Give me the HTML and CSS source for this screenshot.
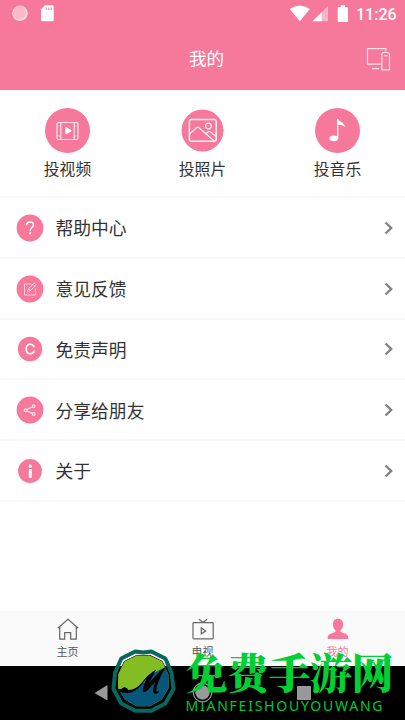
FILE: index.html
```
<!DOCTYPE html>
<html lang="zh-CN">
<head>
<meta charset="utf-8">
<title>我的</title>
<link rel="stylesheet" href="styles.css">
</head>
<body>
<div class="screen">
  <header class="header">
    <div class="status">
      <svg class="status-left" width="60" height="28" viewBox="0 0 60 28">
        <circle cx="20" cy="13.300" r="7.800" fill="#fdd5df"/>
        <circle cx="19.300" cy="12.600" r="6.500" fill="#fbb9ca"/>
        <path d="M45 5.300h7.500q1.200 0 1.200 1.200v13.500q0 1.200-1.200 1.200h-10.200q-1.200 0-1.200-1.200v-10.700z" fill="#fff"/>
        <path d="M46.200 7.500v2.500M48.700 7.500v2.500M51.200 7.500v2.500" stroke="#f799b1" stroke-width="1.300"/>
      </svg>
      <svg class="status-icons" width="62" height="28" viewBox="288 0 62 28">
        <path d="M289.800 9Q299.800 1.800 309.800 9L299.800 21.200z" fill="#fff"/>
        <path d="M312.500 21.200L328 6V21.200z" fill="#fab4c7"/>
        <path d="M312.500 21.200L321.700 12.200V21.200z" fill="#fff"/>
        <path d="M338.700 7h2V5.200h4.200V7h2q1 0 1 1v13q0 1-1 1h-8.200q-1 0-1-1V8q0-1 1-1z" fill="#fff"/>
      </svg>
      <span class="time">11:26</span>
    </div>
    <div class="titlebar">
      <h1 class="title">我的</h1>
      <svg class="devices" width="26" height="26" viewBox="0 0 26 26" fill="none" stroke="#fff" stroke-opacity=".8" stroke-width="1.200">
        <path d="M15.500 18.200H2.500V2.600H20.800V5.500M7 22.700h7"/>
        <path d="M16.800 23.800V9q0-2.500 2-2.500h3.400q2.300 0 2.300 2.500v14.800z"/>
        <path d="M19.300 9.700h3"/>
      </svg>
    </div>
  </header>

  <section class="casts">
    <div class="cast">
      <svg width="46" height="46" viewBox="0 0 46 46">
        <circle cx="22.500" cy="22.500" r="22.500" fill="#f6799b"/>
        <g fill="none" stroke="#fff" stroke-opacity=".8" stroke-width="1.200">
          <rect x="12" y="14.500" width="21" height="17" rx="1.500"/>
          <path d="M15.800 14.500v17M29.200 14.500v17"/>
          <path d="M12 18h3.800M12 28h3.800M29.200 18H33M29.200 28H33" stroke-opacity=".4"/>
        </g>
        <path d="M20.300 19.900q0-1.200 1.200-.7l4.500 2.800q1 .7 0 1.400L21.500 26.200q-1.200.5-1.200-.7z" fill="#fff"/>
      </svg>
      <span>投视频</span>
    </div>
    <div class="cast">
      <svg width="46" height="46" viewBox="0 0 46 46">
        <circle cx="22.500" cy="22.500" r="21" fill="#f6799b"/>
        <g fill="none" stroke="#fff" stroke-opacity=".9" stroke-width="1.500">
          <rect x="9.400" y="11.600" width="26.800" height="21.700" rx="2"/>
          <circle cx="28.400" cy="18" r="2.800" stroke-width="1.200"/>
          <path d="M9.700 26l7-6.500q1-.8 2 0l15.500 13.500M25.300 26.200l3-2.400q1-.8 2 0l5.500 4.400" stroke-width="1.200"/>
        </g>
      </svg>
      <span>投照片</span>
    </div>
    <div class="cast">
      <svg width="46" height="46" viewBox="0 0 46 46">
        <circle cx="22.500" cy="22.500" r="22.500" fill="#f6799b"/>
        <ellipse cx="18.800" cy="30.300" rx="4.300" ry="2.900" fill="#fff"/>
        <path d="M22 30.500V11h1.300C24 14.500 30 14 29.800 19.300Q28 16.500 23.300 16.700V30.500z" fill="#fff"/>
      </svg>
      <span>投音乐</span>
    </div>
  </section>

  <ul class="menu">
    <li class="row">
      <svg class="badge" width="28" height="28" viewBox="0 0 28 28"><circle cx="14" cy="14" r="13.400" fill="#f6799b"/><path d="M10.500 11.200Q10.500 7.900 14 7.900t3.500 3.200c0 2.300-3.400 2.600-3.400 5.700" fill="none" stroke="#fff" stroke-width="1.500"/><circle cx="14.100" cy="19.300" r="1.100" fill="#fff"/></svg>
      <span class="label">帮助中心</span>
      <svg class="chevron" width="10" height="14" viewBox="0 0 10 14"><path d="M1.500 1.500L7.200 7 1.500 12.500"/></svg>
    </li>
    <li class="row">
      <svg class="badge" width="28" height="28" viewBox="0 0 28 28"><circle cx="14" cy="14" r="13.400" fill="#f6799b"/><path d="M15.500 9H8.500v11h11V13.500M11.500 16.800l1-3.300 5.800-5.500 2 2-5.800 5.500zM13 14l1.600 1.600M17 9.500l2 2" fill="none" stroke="#fff" stroke-opacity=".6" stroke-width="1"/></svg>
      <span class="label">意见反馈</span>
      <svg class="chevron" width="10" height="14" viewBox="0 0 10 14"><path d="M1.500 1.500L7.200 7 1.500 12.500"/></svg>
    </li>
    <li class="row">
      <svg class="badge" width="28" height="28" viewBox="0 0 28 28"><circle cx="14" cy="14" r="12.200" fill="#f6799b"/><path d="M18.100 12.200Q17.400 9.300 14.300 9.300c-2.700 0-4.100 1.900-4.100 4.700s1.400 4.700 4.100 4.700q3.200 0 3.900-3.100" fill="none" stroke="#fff" stroke-width="1.600"/></svg>
      <span class="label">免责声明</span>
      <svg class="chevron" width="10" height="14" viewBox="0 0 10 14"><path d="M1.500 1.500L7.200 7 1.500 12.500"/></svg>
    </li>
    <li class="row">
      <svg class="badge" width="28" height="28" viewBox="0 0 28 28"><circle cx="14" cy="14" r="13.400" fill="#f6799b"/><g fill="none" stroke="#fff" stroke-opacity=".75" stroke-width="1.300"><circle cx="9.600" cy="14.200" r="1.300"/><circle cx="17.700" cy="10.200" r="1.300"/><circle cx="17.700" cy="18" r="1.300"/><path d="M11 13.500l5.300-2.600M11 14.900l5.300 2.500"/></g></svg>
      <span class="label">分享给朋友</span>
      <svg class="chevron" width="10" height="14" viewBox="0 0 10 14"><path d="M1.500 1.500L7.200 7 1.500 12.500"/></svg>
    </li>
    <li class="row">
      <svg class="badge" width="28" height="28" viewBox="0 0 28 28"><circle cx="14" cy="14" r="11.900" fill="#f6799b"/><circle cx="14.300" cy="9.200" r="1.600" fill="#fff"/><rect x="12.800" y="12" width="3" height="9" rx="1" fill="#fff"/></svg>
      <span class="label">关于</span>
      <svg class="chevron" width="10" height="14" viewBox="0 0 10 14"><path d="M1.500 1.500L7.200 7 1.500 12.500"/></svg>
    </li>
  </ul>

  <nav class="tabs">
    <div class="tab">
      <svg width="24" height="24" viewBox="0 0 24 24" fill="none" stroke="#666" stroke-width="1.200"><path d="M1.700 11.300L12 2.200l10.300 9.100M3.700 9.800v12.300h5V15.600h6v6.500h5.600V9.800"/></svg>
      <span>主页</span>
    </div>
    <div class="tab">
      <svg width="24" height="24" viewBox="0 0 24 24" fill="none" stroke="#666" stroke-width="1.200"><rect x="2" y="5.600" width="20.200" height="16.300" rx=".8"/><path d="M8 2.300l4.100 3 4.100-3M10.300 11v5.800l4.300-2.900z"/></svg>
      <span>电视</span>
    </div>
    <div class="tab tab-active">
      <svg width="24" height="24" viewBox="0 0 24 24" fill="#f6799b"><path d="M12 1.800c3.200 0 5.200 2.400 5.200 5.700 0 2.600-1.400 4.500-2.700 5.800v1.500c2.500 1.500 7.800 2 7.800 5.700v1.600H1.700v-1.600c0-3.700 5.300-4.200 7.800-5.700v-1.500C8.200 12 6.800 10.100 6.800 7.500c0-3.300 2-5.700 5.200-5.700z"/></svg>
      <span>我的</span>
    </div>
  </nav>

  <footer class="sysnav">
    <svg width="405" height="54" viewBox="0 666 405 54">
      <path d="M94.500 693L107.500 685V700.500z" fill="#999"/>
      <circle cx="202.500" cy="692.500" r="9.300" fill="none" stroke="#999" stroke-width="1.200"/>
      <circle cx="202.500" cy="692.500" r="7.200" fill="#999"/>
      <rect x="297" y="686" width="14" height="14" fill="#999" rx=".8"/>
    </svg>
  </footer>

  <div class="watermark">
    <svg width="300" height="76" viewBox="105 644 300 76">
      <defs>
        <path id="ring" d="M8 -29.500L22 -22.500 28.300 -8 30.200 8 22 22.500 8 29.800 -8 29.800 -22 22.500 -29.800 8 -28.300 -8 -22 -22.500 -8 -29.500 0 -28.500z"/>
        <path id="face" d="M6.700 -25.600L19 -19.500 25 -6.700 25.500 6.700 18.500 18.500 6.700 25.300 -6.700 25.300 -18.500 18.500 -25.500 6.700 -25 -6.700 -19 -19.500 -6.700 -25.600z"/>
        <clipPath id="disc"><use href="#face"/></clipPath>
      </defs>
      <g transform="translate(143.300 681)">
        <use href="#ring" fill="#000"/>
        <path d="M-27 -15L-21 -21.500 -8 -28 0 -27 8 -28 21 -21.500 27 -15z" fill="#fff"/>
        <use href="#face" fill="#000" stroke="#000" stroke-width="1"/>
        <use href="#ring" fill="none" stroke="#09675f" stroke-width="4" stroke-linejoin="round"/>
        <g clip-path="url(#disc)">
          <path d="M-28 -28H28V28H-28z" fill="#82bd23"/>
          <path d="M-28 10L-10 9 0 2 9 -7 18 -12 28 -15V28H-28z" fill="#075579"/>
          <path d="M-26 8.500L-22 8 -19 6 -16 7.500 -15 9Q-7 9 -1 1 5 -7 13 -11.500 9 -5 6.500 1L16 -9Q19 -12.500 23 -14.500 18 -7 15 1 12 8 13.500 11 15.500 10.500 16.500 9 14.500 13.500 11 12.500 8 11 12 1L4 9.500Q1 12 -.5 10.500 -1.500 8.500 3 -2 -5 9 -12 11.500 -18 13 -26 10.500z" fill="#000"/>
        </g>
      </g>
      <text class="mark-cn" x="185.500" y="688.500" textLength="208" lengthAdjust="spacing">免费手游网</text>
      <text class="mark-en" x="185.500" y="710.500" textLength="197" lengthAdjust="spacing">MIANFEISHOUYOUWANG</text>
    </svg>
  </div>
</div>
</body>
</html>
```
FILE: styles.css
```
* { box-sizing: border-box; }
body {
  margin: 0;
  font-family: Roboto, "Noto Sans CJK SC", sans-serif;
  color: #333;
  background: #fff;
}
svg { display: block; flex: none; }
.screen {
  position: relative;
  width: 405px;
  height: 720px;
  display: flex;
  flex-direction: column;
  overflow: hidden;
}
.header { height: 90px; flex: none; background: #f6799b; color: #fff; }
.status { height: 28px; display: flex; align-items: center; }
.status-icons { margin-left: auto; }
.time {
  width: 55px;
  padding: 1px 0 0 6px;
  font-size: 16px;
  line-height: 28px;
  font-weight: 500;
}
.titlebar {
  height: 62px;
  display: grid;
  grid-template-columns: 1fr 36px 1fr;
  align-items: center;
  padding: 0 14px 0 23px;
}
.title {
  grid-column: 2;
  margin: 0;
  font-size: 17.600px;
  line-height: 26px;
  font-weight: 400;
  white-space: nowrap;
}
.devices { justify-self: end; margin-bottom: 1px; }
.casts {
  height: 108px;
  flex: none;
  display: grid;
  grid-template-columns: repeat(3, 1fr);
  padding-top: 18px;
  border-bottom: 2px solid #f7f7f7;
}
.cast { display: flex; flex-direction: column; align-items: center; }
.cast span { margin-top: 4px; font-size: 15.800px; line-height: 24px; }
.menu { margin: 0; padding: 0; list-style: none; }
.row {
  height: 60.750px;
  display: flex;
  align-items: center;
  padding: 1px 11px 0 16px;
  border-bottom: 2px solid #f7f7f7;
}
.label { margin-left: 11.500px; padding-top: 3px; font-size: 17.800px; line-height: 28px; }
.chevron { margin-left: auto; fill: none; stroke: #828282; stroke-width: 2.400; }
.tabs {
  height: 55px;
  flex: none;
  margin-top: auto;
  display: grid;
  grid-template-columns: repeat(3, 1fr);
  padding-top: 5px;
  background: #fafafa;
  border-top: 1px solid #f4f4f4;
}
.tab {
  display: flex;
  flex-direction: column;
  align-items: center;
  color: #555;
}
.tab span { margin-top: 4px; font-size: 11px; line-height: 16px; }
.tab .tab-active, .tab-active { color: #f6799b; }
.sysnav { height: 54px; flex: none; background: #000; }
.watermark { position: absolute; right: 0; bottom: 0; }
.mark-cn {
  font-family: "Noto Serif CJK SC", "Noto Sans CJK SC", serif;
  font-size: 42px;
  font-weight: 900;
  fill: #00d034;
}
.mark-en {
  font-family: "Noto Sans", sans-serif;
  font-size: 14px;
  font-weight: 400;
  fill: #00c832;
}
```
